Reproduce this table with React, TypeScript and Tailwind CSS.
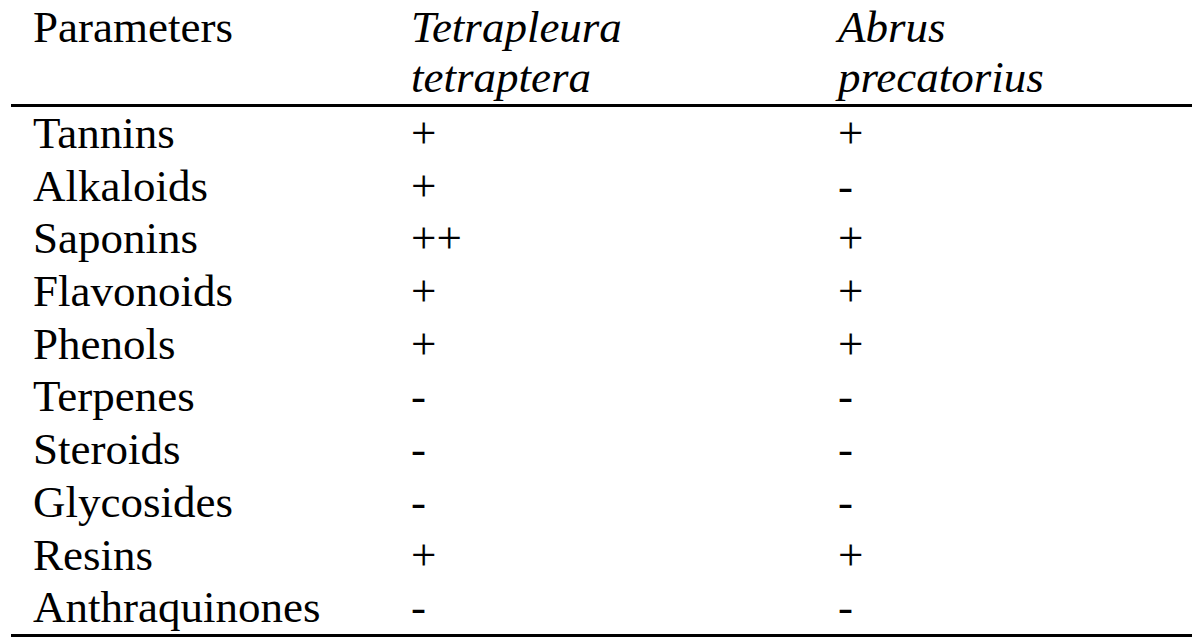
import React from "react";

const rows: [string, string, string][] = [
  ["Tannins", "+", "+"],
  ["Alkaloids", "+", "-"],
  ["Saponins", "++", "+"],
  ["Flavonoids", "+", "+"],
  ["Phenols", "+", "+"],
  ["Terpenes", "-", "-"],
  ["Steroids", "-", "-"],
  ["Glycosides", "-", "-"],
  ["Resins", "+", "+"],
  ["Anthraquinones", "-", "-"],
];

export default function App() {
  return (
    <div
      className="w-[1197px] h-[644px] bg-white text-black overflow-hidden"
      style={{ fontFamily: '"Liberation Serif", "Times New Roman", serif' }}
    >
      <div className="ml-[11px] w-[1181px] text-[45px]">
        <div className="grid grid-cols-[400px_427px_1fr] pt-[2px] pb-[2px] leading-[50px]">
          <div className="pl-[22px]">Parameters</div>
          <div className="italic">
            <div>Tetrapleura</div>
            <div>tetraptera</div>
          </div>
          <div className="italic">
            <div>Abrus</div>
            <div>precatorius</div>
          </div>
        </div>
        <div className="border-t-[3px] border-b-[3px] border-black">
          {rows.map(([name, a, b]) => (
            <div key={name} className="grid grid-cols-[400px_427px_1fr] leading-[52.7px] h-[52.7px]">
              <div className="pl-[22px]">{name}</div>
              <div>{a}</div>
              <div>{b}</div>
            </div>
          ))}
        </div>
      </div>
    </div>
  );
}
